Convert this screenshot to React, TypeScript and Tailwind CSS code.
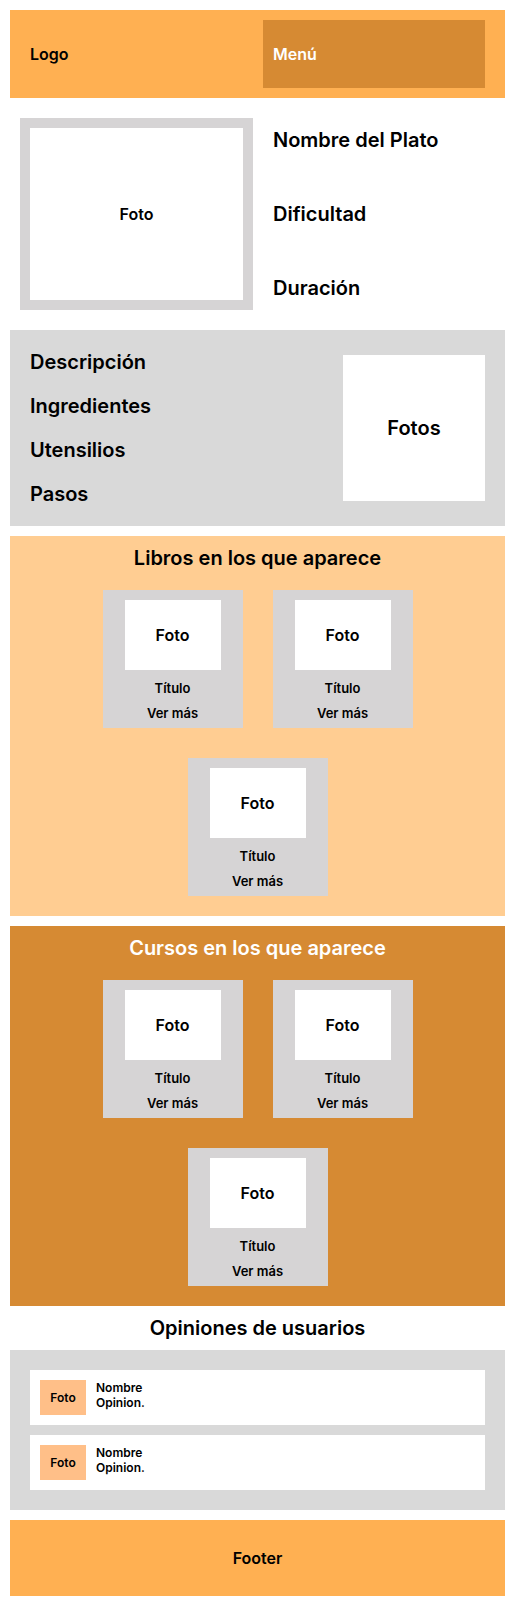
const font = "font-['Inter','Liberation_Sans',sans-serif]";

function Card() {
  return (
    <div className="flex h-[138px] w-[140px] flex-col items-center bg-[#d6d4d5] pt-[10px]">
      <div className="flex h-[70px] w-[96px] items-center justify-center bg-white text-[16px] font-semibold leading-[20px] text-black">
        Foto
      </div>
      <div className="mt-[10px] text-[13px] font-semibold leading-[16px] text-black">Título</div>
      <div className="mt-[9px] text-[13px] font-semibold leading-[16px] text-black">Ver más</div>
    </div>
  );
}

function CardSection({ title, bg, titleColor }: { title: string; bg: string; titleColor: string }) {
  return (
    <section className={`flex h-[380px] flex-col items-center pt-[10px] ${bg}`}>
      <h2 className={`text-[20px] font-semibold leading-[24px] ${titleColor}`}>{title}</h2>
      <div className="mt-[20px] flex w-[310px] flex-wrap justify-center gap-[30px]">
        <Card />
        <Card />
        <Card />
      </div>
    </section>
  );
}

function Opinion() {
  return (
    <div className="flex h-[55px] items-start gap-[10px] bg-white p-[10px]">
      <div className="flex h-[35px] w-[46px] items-center justify-center bg-[#ffbf88] text-[12px] font-semibold text-black">
        Foto
      </div>
      <div className="flex flex-col text-[12px] font-semibold leading-[15px] text-black">
        <span>Nombre</span>
        <span>Opinion.</span>
      </div>
    </div>
  );
}

export default function App() {
  return (
    <div className={`flex w-[515px] flex-col gap-[10px] bg-white p-[10px] ${font}`}>
      {/* header */}
      <header className="flex h-[88px] items-center justify-between bg-[#ffb052] py-[10px] pl-[20px] pr-[20px]">
        <span className="text-[16px] font-semibold text-black">Logo</span>
        <div className="flex h-[68px] w-[222px] items-center bg-[#d68a33] pl-[10px] text-[16px] font-semibold text-white">
          Menú
        </div>
      </header>

      {/* plato */}
      <section className="flex gap-[20px] p-[10px]">
        <div className="h-[192px] w-[233px] border-[10px] border-[#d6d4d5] bg-white">
          <div className="flex h-full items-center justify-center text-[16px] font-semibold text-black">Foto</div>
        </div>
        <div className="flex flex-col justify-between py-[10px] text-[20px] font-semibold leading-[24px] text-black">
          <span>Nombre del Plato</span>
          <span>Dificultad</span>
          <span>Duración</span>
        </div>
      </section>

      {/* detalles */}
      <section className="flex items-center justify-between bg-[#d9d9d9] p-[20px]">
        <div className="flex flex-col gap-[20px] text-[20px] font-semibold leading-[24px] text-black">
          <span>Descripción</span>
          <span>Ingredientes</span>
          <span>Utensilios</span>
          <span>Pasos</span>
        </div>
        <div className="flex h-[146px] w-[142px] items-center justify-center bg-white text-[20px] font-semibold text-black">
          Fotos
        </div>
      </section>

      <CardSection title="Libros en los que aparece" bg="bg-[#ffcd92]" titleColor="text-black" />
      <CardSection title="Cursos en los que aparece" bg="bg-[#d68a33]" titleColor="text-white" />

      <h2 className="text-center text-[20px] font-semibold leading-[24px] text-black">Opiniones de usuarios</h2>
      <section className="flex flex-col gap-[10px] bg-[#d9d9d9] p-[20px]">
        <Opinion />
        <Opinion />
      </section>

      <footer className="flex h-[76px] items-center justify-center bg-[#ffb052] text-[16px] font-semibold text-black">
        Footer
      </footer>
    </div>
  );
}
